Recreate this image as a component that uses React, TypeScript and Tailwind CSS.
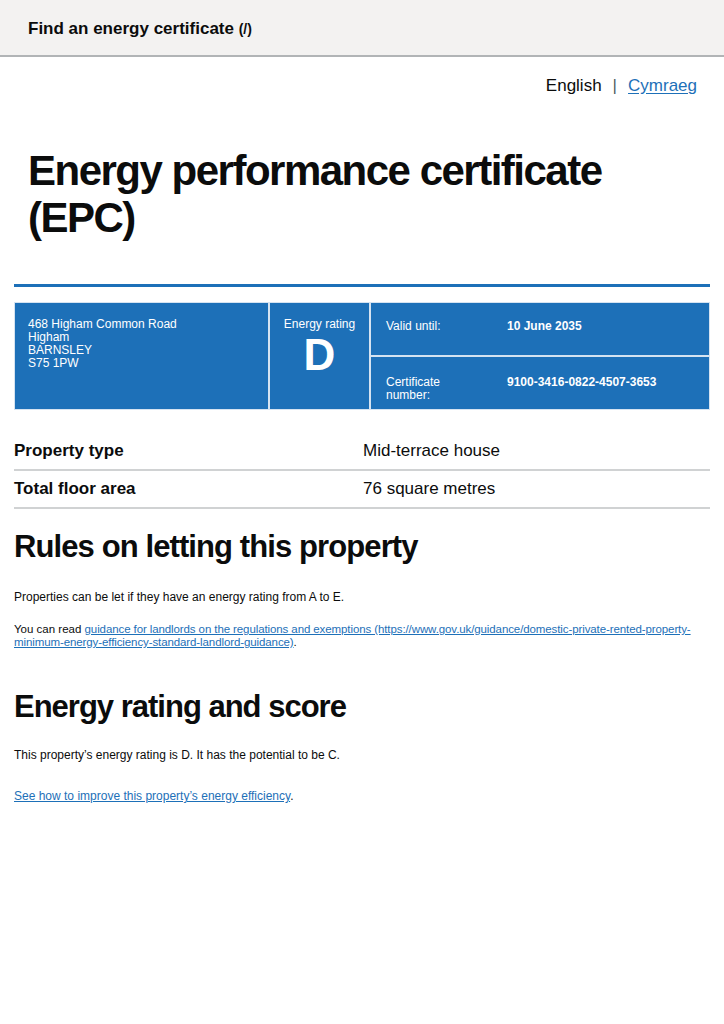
const body = "font-['Liberation_Sans',Arial,sans-serif]";

export default function App() {
  return (
    <div className={`min-h-screen bg-white text-[#0b0c0c] ${body}`}>
      <header className="h-[57px] bg-[#f3f2f1] border-b-2 border-[#b1b4b6] flex items-center px-[28px]">
        <a href="/" className="text-[17px] font-bold text-[#0b0c0c] no-underline pt-[2px]">
          Find an energy certificate <span className="text-[14px]">(/)</span>
        </a>
      </header>

      <div className="flex justify-end items-center pr-[27px] pt-[17px] text-[17px] leading-[24px]">
        <span>English</span>
        <span className="mx-[11px] text-[#505a5f]">|</span>
        <a href="#" className="text-[#1d70b8] underline underline-offset-2">Cymraeg</a>
      </div>

      <main className="px-[14px]">
        <h1 className="font-bold text-[42px] leading-[47px] tracking-[-1.5px] px-[14px] pt-[49px]">
          Energy performance certificate (EPC)
        </h1>

        <div className="mt-[43px] h-[3px] bg-[#1d70b8]" />

        <div className="mt-[15px] bg-[#d5e3f1] p-px flex gap-[2px] text-white text-[12px] leading-[13px]">
          <div className="w-[253px] bg-[#1d70b8] px-[13px] pt-[15px] h-[106px]">
            <p>468 Higham Common Road</p>
            <p>Higham</p>
            <p>BARNSLEY</p>
            <p>S75 1PW</p>
          </div>
          <div className="w-[99px] bg-[#1d70b8] flex flex-col items-center pt-[15px]">
            <span>Energy rating</span>
            <span className="text-[44px] leading-[44px] font-bold mt-[2px]">D</span>
          </div>
          <div className="flex-1 flex flex-col gap-[2px]">
            <div className="h-[52px] bg-[#1d70b8] flex px-[15px] pt-[17px]">
              <span className="w-[121px]">Valid until:</span>
              <span className="font-bold">10 June 2035</span>
            </div>
            <div className="flex-1 bg-[#1d70b8] flex px-[15px] pt-[19px]">
              <span className="w-[121px] pr-[45px]">Certificate number:</span>
              <span className="font-bold">9100-3416-0822-4507-3653</span>
            </div>
          </div>
        </div>

        <dl className="mt-[22px] text-[17px] leading-[20px]">
          <div className="flex border-b-2 border-[#d0d2d3] pt-[9px] pb-[8px]">
            <dt className="w-[349px] font-bold">Property type</dt>
            <dd>Mid-terrace house</dd>
          </div>
          <div className="flex border-b-2 border-[#d0d2d3] pt-[8px] pb-[8px]">
            <dt className="w-[349px] font-bold">Total floor area</dt>
            <dd>76 square metres</dd>
          </div>
        </dl>

        <h2 className="font-bold text-[31px] leading-[36px] tracking-[-0.9px] mt-[20px]">
          Rules on letting this property
        </h2>
        <p className="text-[12px] leading-[13px] mt-[26px]">
          Properties can be let if they have an energy rating from A to E.
        </p>
        <p className="text-[11.5px] leading-[13px] mt-[19px]">
          You can read{" "}
          <a href="#" className="text-[#1d70b8] underline tracking-[-0.1px]">
            guidance for landlords on the regulations and exemptions (https://www.gov.uk/guidance/domestic-private-rented-property-minimum-energy-efficiency-standard-landlord-guidance)
          </a>
          .
        </p>

        <h2 className="font-bold text-[31px] leading-[36px] tracking-[-1px] mt-[40px]">
          Energy rating and score
        </h2>
        <p className="text-[12px] leading-[13px] mt-[24px]">
          This property’s energy rating is D. It has the potential to be C.
        </p>
        <p className="text-[12px] leading-[13px] mt-[28px]">
          <a href="#" className="text-[#1d70b8] underline">
            See how to improve this property’s energy efficiency
          </a>
          .
        </p>
      </main>
    </div>
  );
}
